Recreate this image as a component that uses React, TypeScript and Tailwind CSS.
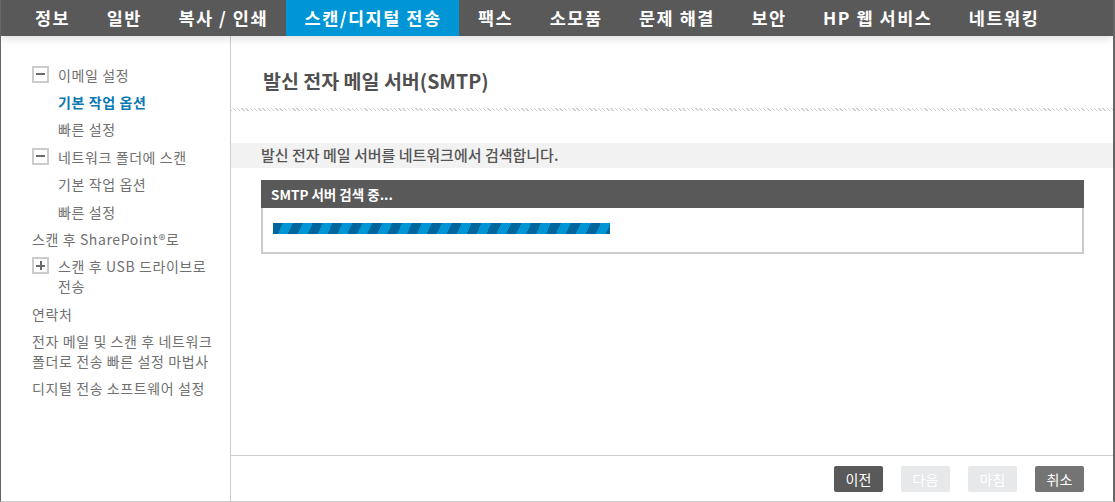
import React from "react";

const FONT = "font-['Noto_Sans_CJK_KR','Noto_Sans',sans-serif]";

const tabs = [
  "정보",
  "일반",
  "복사 / 인쇄",
  "스캔/디지털 전송",
  "팩스",
  "소모품",
  "문제 해결",
  "보안",
  "HP 웹 서비스",
  "네트워킹",
];

function ToggleBox({ open }: { open: boolean }) {
  return (
    <div className="relative mr-[9px] mt-[1px] flex h-[17px] w-[17px] shrink-0 items-center justify-center border-2 border-[#cccccc] bg-white">
      <span className="h-[2px] w-[9px] bg-[#6b6b6b]" />
      {!open && <span className="absolute h-[9px] w-[2px] bg-[#6b6b6b]" />}
    </div>
  );
}

type NavItem = {
  label: string;
  level: 0 | 1;
  toggle?: "open" | "closed";
  active?: boolean;
};

const sideItems: NavItem[] = [
  { label: "이메일 설정", level: 0, toggle: "open" },
  { label: "기본 작업 옵션", level: 1, active: true },
  { label: "빠른 설정", level: 1 },
  { label: "네트워크 폴더에 스캔", level: 0, toggle: "open" },
  { label: "기본 작업 옵션", level: 1 },
  { label: "빠른 설정", level: 1 },
  { label: "스캔 후 SharePoint®로", level: 0 },
  { label: "스캔 후 USB 드라이브로 전송", level: 0, toggle: "closed" },
  { label: "연락처", level: 0 },
  { label: "전자 메일 및 스캔 후 네트워크 폴더로 전송 빠른 설정 마법사", level: 0 },
  { label: "디지털 전송 소프트웨어 설정", level: 0 },
];

function Sidebar() {
  return (
    <aside className="flex w-[230px] shrink-0 flex-col border-r border-[#cccccc] pl-[31px] pr-[8px] pt-[25px]">
      {sideItems.map((item, i) => (
        <div
          key={i}
          className={`flex items-start break-keep py-[3.7px] text-[14px] leading-[20px] tracking-[0.6px] ${item.level === 1 ? "pl-[26px]" : ""} ${
            item.active ? "font-bold text-[#0a78b4]" : "text-[#707070]"
          }`}
        >
          {item.toggle && <ToggleBox open={item.toggle === "open"} />}
          <span>{item.label}</span>
        </div>
      ))}
    </aside>
  );
}

function Button({ label, variant }: { label: string; variant: "dark" | "off" | "mid" }) {
  const tone =
    variant === "dark"
      ? "bg-[#595959] text-white"
      : variant === "mid"
      ? "bg-[#747474] text-white"
      : "bg-[#e6e8e9] text-white";
  return (
    <button className={`h-[26px] w-[49px] rounded-[2px] text-[14px] leading-none ${tone}`}>
      {label}
    </button>
  );
}

export default function App() {
  return (
    <div className={`${FONT} flex h-[502px] w-full flex-col overflow-hidden border-b border-l border-r-2 border-b-[#cccccc] border-l-[#666666] border-r-[#666666] bg-white`}>
      {/* Top navigation */}
      <nav className="relative z-10 flex h-9 shrink-0 items-stretch bg-[#595959] pl-[15px] shadow-[0_3px_8px_rgba(0,0,0,0.12)]">
        {tabs.map((t) => (
          <div
            key={t}
            className={`flex items-center whitespace-nowrap pl-[19px] pr-[17.5px] text-[17.5px] font-bold tracking-[1.5px] text-white ${
              t === "스캔/디지털 전송" ? "bg-[#0096d6]" : ""
            }`}
          >
            {t}
          </div>
        ))}
      </nav>

      <div className="flex min-h-0 flex-1">
        <Sidebar />

        <main className="flex min-w-0 flex-1 flex-col">
          <div className="h-[72px] shrink-0 pl-[32px] pt-[31px]">
            <h1 className="text-[19.5px] font-bold leading-7 text-[#505050]">발신 전자 메일 서버(SMTP)</h1>
          </div>
          <div className="h-[3px] shrink-0 bg-[repeating-linear-gradient(45deg,#d0d0d0_0_1px,transparent_1px_3px)]" />

          <div className="mt-[32px] flex h-[25px] shrink-0 items-center bg-[#f2f2f2] pl-[30px] text-[15px] font-medium text-[#555555]">
            발신 전자 메일 서버를 네트워크에서 검색합니다.
          </div>

          <section className="ml-[30px] mr-[29px] mt-[12px] shrink-0">
            <div className="flex h-[28px] items-center bg-[#595959] pl-[10px] text-[13.5px] font-bold text-white">
              SMTP 서버 검색 중...
            </div>
            <div className="h-[46px] border-2 border-t-0 border-[#cccccc] pl-[10px] pt-[15px]">
              <div className="h-[11px] w-[337px] bg-[repeating-linear-gradient(115deg,#00669b_0_9px,#0096d6_9px_18px)]" />
            </div>
          </section>

          <div className="flex-1" />

          <footer className="flex h-[46px] shrink-0 items-center justify-end gap-[18px] border-t border-[#cccccc] pr-[29px] pt-[1px]">
            <Button label="이전" variant="dark" />
            <Button label="다음" variant="off" />
            <Button label="마침" variant="off" />
            <Button label="취소" variant="mid" />
          </footer>
        </main>
      </div>
    </div>
  );
}
